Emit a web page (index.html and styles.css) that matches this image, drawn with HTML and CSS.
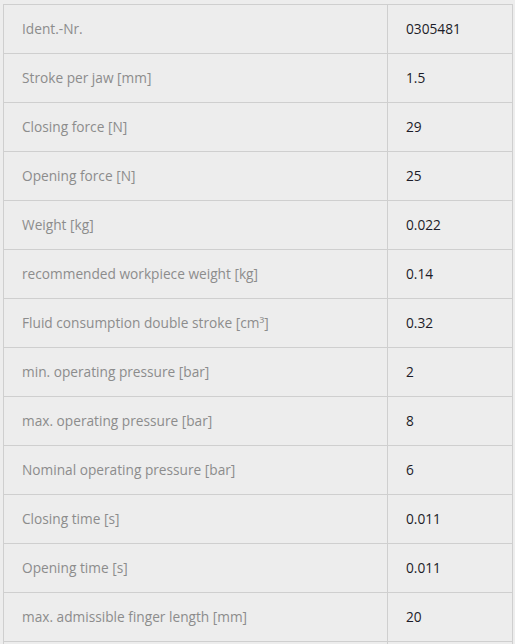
FILE: index.html
```html
<!DOCTYPE html>
<html>
<head>
<meta charset="utf-8">
<link rel="stylesheet" href="styles.css">
</head>
<body>
<table class="specs">
  <colgroup><col class="col-label"><col class="col-value"></colgroup>
  <tbody>
    <tr><td class="label">Ident.-Nr.</td><td class="value">0305481</td></tr>
    <tr><td class="label">Stroke per jaw [mm]</td><td class="value">1.5</td></tr>
    <tr><td class="label">Closing force [N]</td><td class="value">29</td></tr>
    <tr><td class="label">Opening force [N]</td><td class="value">25</td></tr>
    <tr><td class="label">Weight [kg]</td><td class="value">0.022</td></tr>
    <tr><td class="label">recommended workpiece weight [kg]</td><td class="value">0.14</td></tr>
    <tr><td class="label">Fluid consumption double stroke [cm³]</td><td class="value">0.32</td></tr>
    <tr><td class="label">min. operating pressure [bar]</td><td class="value">2</td></tr>
    <tr><td class="label">max. operating pressure [bar]</td><td class="value">8</td></tr>
    <tr><td class="label">Nominal operating pressure [bar]</td><td class="value">6</td></tr>
    <tr><td class="label">Closing time [s]</td><td class="value">0.011</td></tr>
    <tr><td class="label">Opening time [s]</td><td class="value">0.011</td></tr>
    <tr><td class="label">max. admissible finger length [mm]</td><td class="value">20</td></tr>
    <tr><td class="label"></td><td class="value"></td></tr>
  </tbody>
</table>
</body>
</html>
```
FILE: styles.css
```css
html, body {
  background: #ededed;
}
body {
  margin: 4px 0 0 3px;
  font-family: "Open Sans", "Noto Sans", sans-serif;
  font-size: 13.7px;
}
.specs {
  border-collapse: collapse;
  table-layout: fixed;
  width: 510px;
}
.col-label { width: 384px; }
.specs td {
  border: 1px solid #cfcfcf;
  height: 48px;
  padding: 0 18px 2px;
  vertical-align: middle;
  box-sizing: border-box;
}
.specs tr { height: 49px; }
.label {
  color: #8c8c8c;
}
.value {
  color: #1c1c28;
}
```
